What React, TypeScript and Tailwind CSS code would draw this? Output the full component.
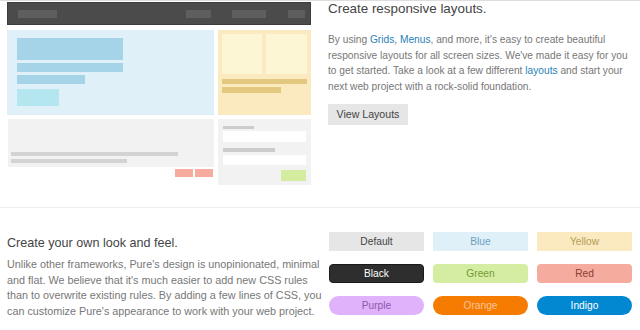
const swatches = [
  { label: "Default", cls: "bg-[#e6e6e6] text-[#444]" },
  { label: "Blue", cls: "bg-[#dff0f8] text-[#6ba0c0]" },
  { label: "Yellow", cls: "bg-[#fbeabf] text-[#b39a5a]" },
  { label: "Black", cls: "bg-[#2e2e2e] text-white rounded-[4px] border border-[#1a1a1a]" },
  { label: "Green", cls: "bg-[#d4eda2] text-[#749a32] rounded-[4px]" },
  { label: "Red", cls: "bg-[#f5ab9e] text-[#8a3f33] rounded-[4px]" },
  { label: "Purple", cls: "bg-[#dfb2fb] text-[#8d58ad] rounded-full" },
  { label: "Orange", cls: "bg-[#f57c00] text-[#fcc39a] rounded-full" },
  { label: "Indigo", cls: "bg-[#0288d1] text-white rounded-full" },
];

const Illustration = () => (
  <div className="flex flex-col gap-[4px] w-[304px] mt-[1px]">
    {/* fake site header */}
    <div className="h-[23px] bg-[#4b4b4b] border border-[#3c3c3c] flex items-center pl-[10px] pr-[5px] mb-[1px]">
      <div className="w-[39px] h-[8px] bg-[#5e5e5e]" />
      <div className="ml-auto w-[25px] h-[8px] bg-[#5e5e5e]" />
      <div className="ml-[21px] w-[34px] h-[8px] bg-[#5e5e5e]" />
      <div className="ml-[22px] w-[17px] h-[8px] bg-[#5e5e5e]" />
    </div>
    <div className="flex gap-[4px] h-[85px]">
      <div className="w-[207px] bg-[#e0f0f8] pl-[10px] pt-[8px] flex flex-col">
        <div className="w-[106px] h-[22px] bg-[#a5d3e7]" />
        <div className="w-[106px] h-[9px] bg-[#a5d3e7] mt-[3px]" />
        <div className="w-[68px] h-[9px] bg-[#a5d3e7] mt-[3px]" />
        <div className="w-[42px] h-[17px] bg-[#b4e6f0] mt-[5px]" />
      </div>
      <div className="w-[93px] bg-[#fbeac0] p-[4px] flex flex-col">
        <div className="flex gap-[4px] h-[40px]">
          <div className="w-[40px] bg-[#fdf6d5]" />
          <div className="w-[41px] bg-[#fdf6d5]" />
        </div>
        <div className="w-[85px] h-[5px] bg-[#e3c97f] mt-[5px]" />
        <div className="w-[59px] h-[6px] bg-[#e3c97f] mt-[3px]" />
      </div>
    </div>
    <div className="flex gap-[4px]">
      <div className="w-[207px] flex flex-col">
        <div className="ml-[1px] w-[206px] h-[48px] bg-[#f2f2f2] flex flex-col justify-end pl-[3px] pb-[4px] gap-[3px]">
          <div className="w-[167px] h-[4px] bg-[#d3d3d3]" />
          <div className="w-[116px] h-[4px] bg-[#d3d3d3]" />
        </div>
        <div className="flex justify-end gap-[2px] mt-[2px] pr-[1px]">
          <div className="w-[18px] h-[8px] bg-[#f5ab9e]" />
          <div className="w-[18px] h-[8px] bg-[#f5ab9e]" />
        </div>
      </div>
      <div className="w-[93px] h-[66px] bg-[#f2f2f2] px-[5px] pt-[7px] flex flex-col">
        <div className="w-[31px] h-[3px] bg-[#cccccc]" />
        <div className="w-[83px] h-[11px] bg-white mt-[2px]" />
        <div className="w-[52px] h-[4px] bg-[#cccccc] mt-[6px]" />
        <div className="w-[83px] h-[10px] bg-white mt-[3px]" />
        <div className="self-end w-[25px] h-[11px] bg-[#d4ec9f] mt-[5px]" />
      </div>
    </div>
  </div>
);

const link = "text-[#2b80b9]";

export default function App() {
  return (
    <div
      className="w-[640px] h-[330px] overflow-hidden bg-white border-t border-[#dddddd] text-[#777]"
      style={{ fontFamily: "'Liberation Sans', Arial, sans-serif" }}
    >
      <section className="flex h-[207px] border-b border-[#eeeeee]">
        <div className="w-[321px] shrink-0 pl-[7px]">
          <Illustration />
        </div>
        <div className="pl-[7px]">
          <h2 className="text-[13.4px] leading-[16px] text-[#444]">Create responsive layouts.</h2>
          <p className="mt-[15px] text-[10.2px] leading-[15.6px] whitespace-nowrap">
            By using <span className={link}>Grids</span>, <span className={link}>Menus</span>, and more, it's easy to create beautiful
            <br />
            responsive layouts for all screen sizes. We've made it easy for you
            <br />
            to get started. Take a look at a few different <span className={link}>layouts</span> and start your
            <br />
            next web project with a rock-solid foundation.
          </p>
          <button className="mt-[10px] w-[80px] h-[21px] bg-[#e6e6e6] text-[#444] text-[10.6px] flex items-center justify-center">
            View Layouts
          </button>
        </div>
      </section>
      <section className="flex">
        <div className="w-[320px] shrink-0 pl-[7px] pt-[27px]">
          <h2 className="text-[12.6px] leading-[16px] text-[#444]">Create your own look and feel.</h2>
          <p className="mt-[6px] text-[10.8px] leading-[15.6px] whitespace-nowrap">
            Unlike other frameworks, Pure's design is unopinionated, minimal
            <br />
            and flat. We believe that it's much easier to add new CSS rules
            <br />
            than to overwrite existing rules. By adding a few lines of CSS, you
            <br />
            can customize Pure's appearance to work with your web project.
          </p>
        </div>
        <div className="pl-[9px] pt-[24px] grid grid-cols-[95px_95px_95px] gap-x-[9px] gap-y-[9px]">
          {swatches.map((s) => (
            <div key={s.label} className={`h-[19px] flex items-center justify-center text-[10.2px] ${s.cls}`}>
              {s.label}
            </div>
          ))}
        </div>
      </section>
    </div>
  );
}
